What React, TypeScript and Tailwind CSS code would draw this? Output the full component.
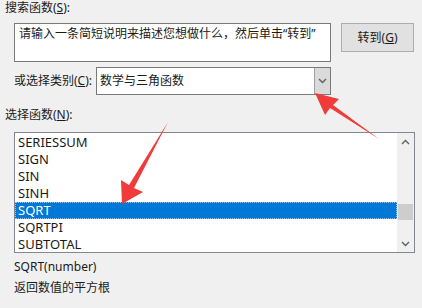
import React from 'react';

const items = ['SERIESSUM', 'SIGN', 'SIN', 'SINH', 'SQRT', 'SQRTPI', 'SUBTOTAL'];

function Chevron({ up = false }: { up?: boolean }) {
  return (
    <svg width="9" height="6" viewBox="0 0 9 6" className={up ? 'rotate-180' : ''}>
      <path d="M1 1 L4.5 4.5 L8 1" fill="none" stroke="#606060" strokeWidth="1.4" />
    </svg>
  );
}

export default function App() {
  return (
    <div
      className="relative h-[308px] w-[422px] overflow-hidden bg-[#f0f0f0] text-[12px] text-[#1a1a1a]"
      style={{ fontFamily: '"Segoe UI", "Noto Sans", "Noto Sans CJK SC", sans-serif' }}
    >
      <div className="flex h-[15px] items-center pl-[5px] pt-[1px] leading-none">
        搜索函数(<span className="underline">S</span>):
      </div>

      <div className="mt-[8px] flex items-start">
        <div className="ml-[14px] h-[39px] w-[317px] border border-[#7a7a7a] bg-white px-[4px] pt-[2px] leading-[16px]">
          请输入一条简短说明来描述您想做什么，然后单击“转到”
        </div>
        <button
          type="button"
          className="ml-[10px] flex h-[29px] w-[73px] items-center justify-center border border-[#adadad] bg-[#e1e1e1] leading-none"
        >
          转到(<span className="underline">G</span>)
        </button>
      </div>

      <div className="mt-[5px] flex items-center">
        <div className="w-[96px] shrink-0 whitespace-nowrap pl-[14px] leading-none">
          或选择类别(<span className="underline">C</span>):
        </div>
        <div className="flex h-[28px] w-[235px] items-stretch border border-[#7a7a7a] bg-white">
          <div className="flex flex-1 items-center pl-[3px] leading-none">数学与三角函数</div>
          <div className="flex w-[16px] items-center justify-center border-l border-[#a0a0a0] bg-[#dadada]">
            <Chevron />
          </div>
        </div>
      </div>

      <div className="mt-[13px] flex h-[14px] items-center pl-[5px] leading-none">
        选择函数(<span className="underline">N</span>):
      </div>

      <div className="ml-[14px] mt-[10px] flex h-[121px] w-[401px] border border-[#828790] bg-white">
        <div className="flex-1 pt-[1px] text-[13px]">
          {items.map((it) => (
            <div
              key={it}
              className={
                it === 'SQRT'
                  ? 'flex h-[17px] items-center border border-dotted border-[#9cc4ec] bg-[#0078d7] pl-[2px] leading-none text-white'
                  : 'flex h-[17px] items-center border border-transparent pl-[2px] leading-none'
              }
            >
              {it}
            </div>
          ))}
        </div>
        <div className="flex w-[17px] flex-col items-center bg-[#f0f0f0]">
          <div className="flex h-[17px] w-full items-center justify-center">
            <Chevron up />
          </div>
          <div className="w-full flex-1">
            <div className="ml-[1px] mt-[54px] h-[16px] w-[15px] bg-[#cdcdcd]" />
          </div>
          <div className="flex h-[17px] w-full items-center justify-center">
            <Chevron />
          </div>
        </div>
      </div>

      <div className="mt-[7px] flex h-[14px] items-center pl-[14px] leading-none">SQRT(number)</div>
      <div className="mt-[7px] flex h-[14px] items-center pl-[14px] leading-none">返回数值的平方根</div>

      <svg className="pointer-events-none absolute left-0 top-0" width="422" height="308" viewBox="0 0 422 308">
        <polygon points="315,93 339,99 333,105 379,139 330,108 325,115" fill="#f03b3a" />
        <polygon points="122,204 121,180 129,185 168,122 134,188 143,192" fill="#f03b3a" />
      </svg>
    </div>
  );
}
